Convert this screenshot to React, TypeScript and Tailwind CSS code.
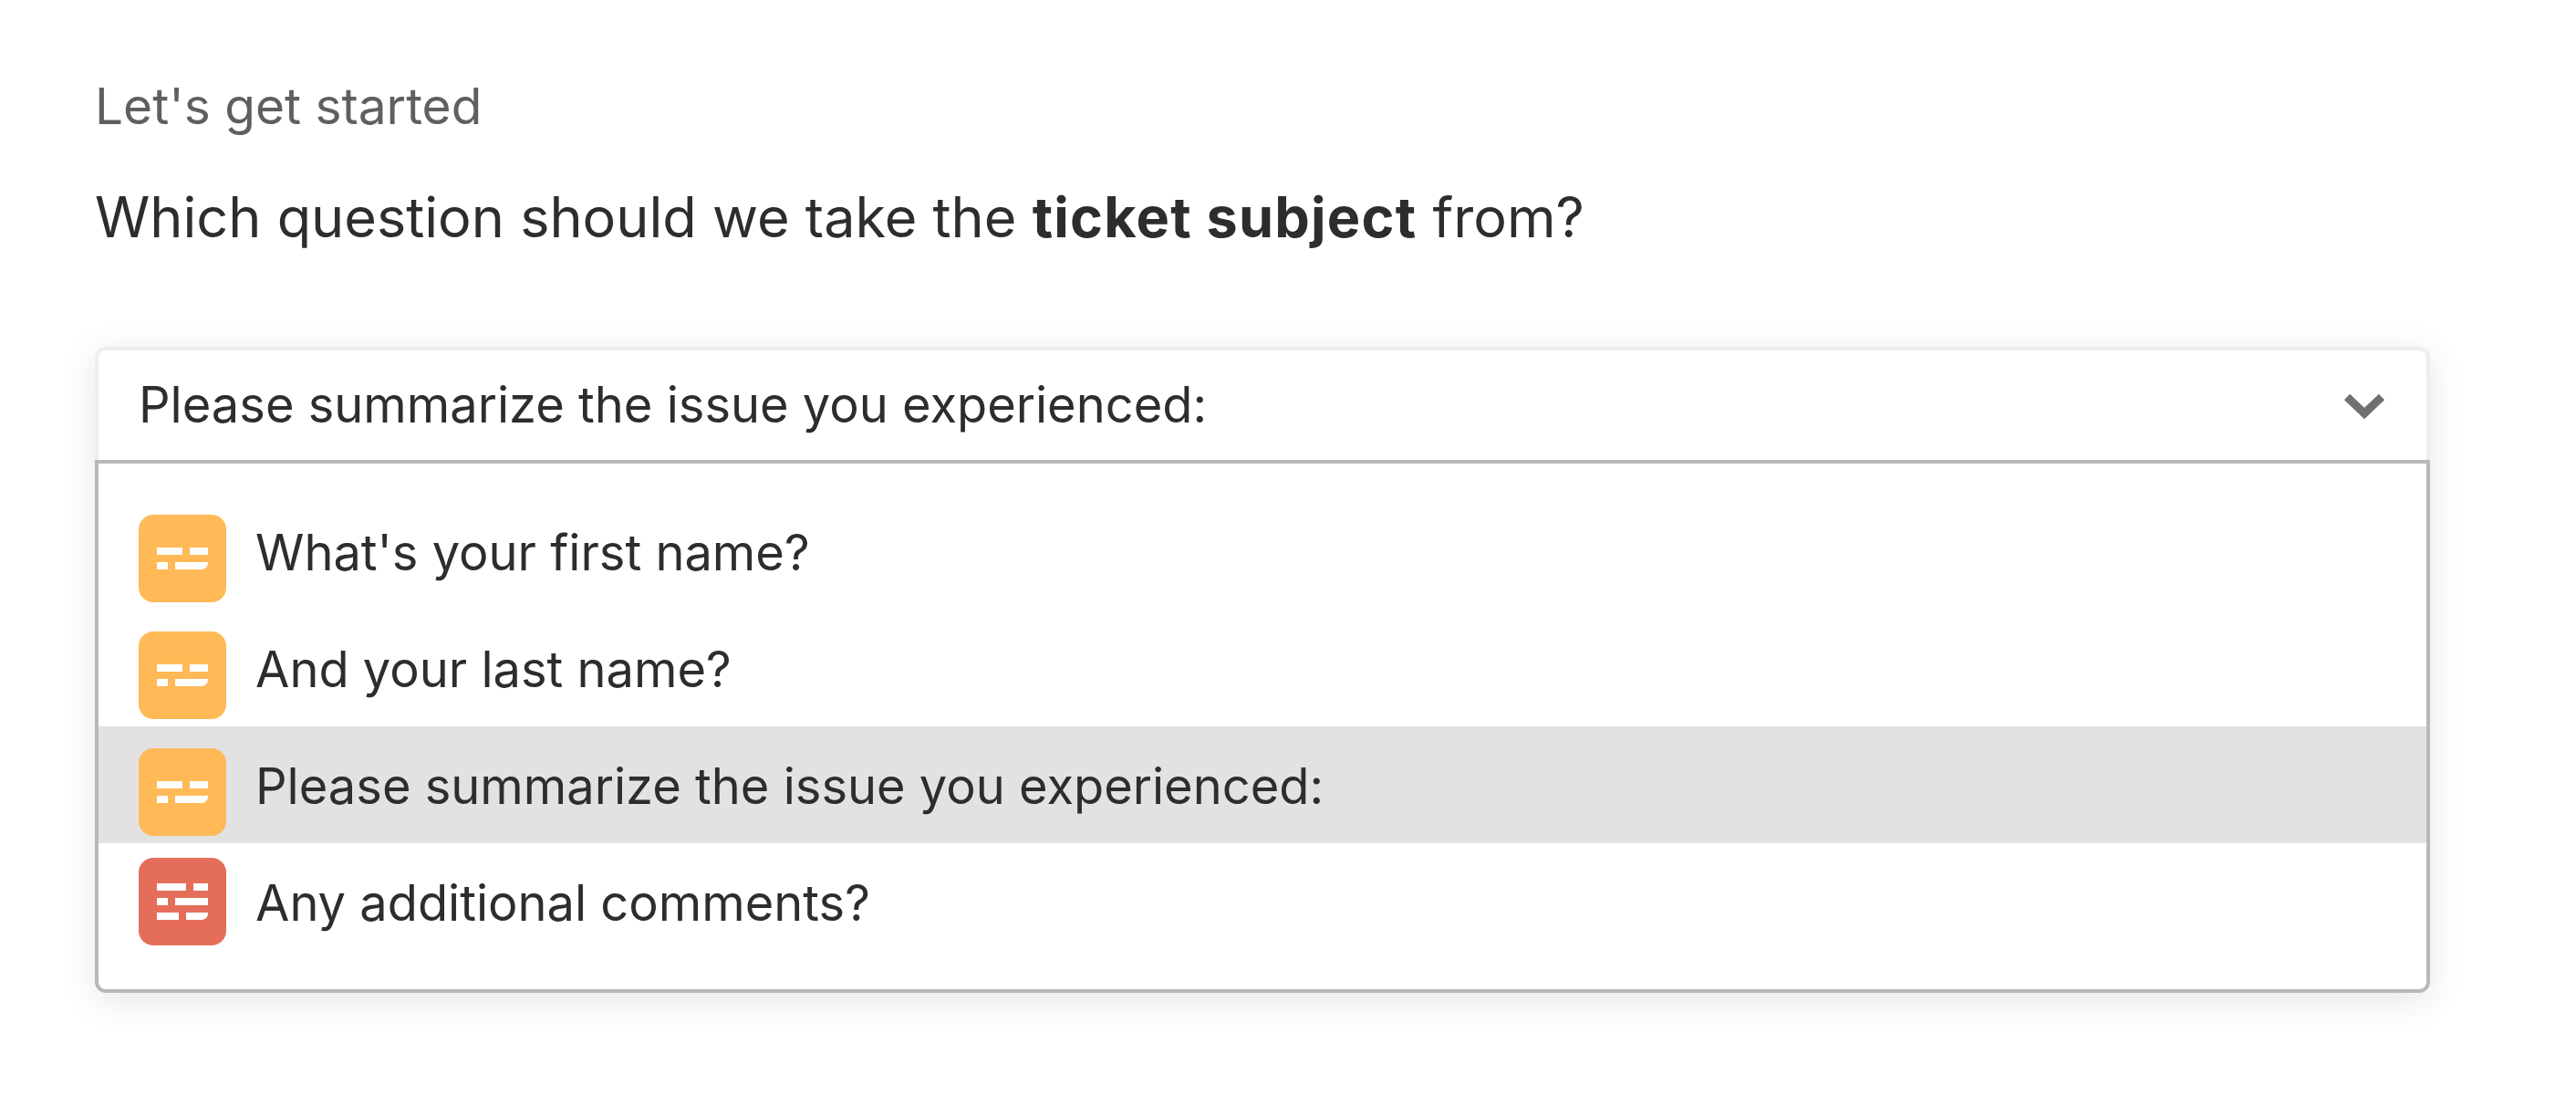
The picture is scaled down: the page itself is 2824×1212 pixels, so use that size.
const rowClass = "h-[128px] flex items-center gap-[32px] pl-[44px]";
const rowText = "text-[#2d2d2d] text-[54.2px] leading-[72px] pt-[1px]";

function ShortAnswerIcon() {
    return (
        <svg width="96" height="96" viewBox="0 0 96 96" className="shrink-0 mt-[16px]">
            <rect width="96" height="96" rx="16" fill="#ffb957" />
            <path
                d="M20 36h28v8H20zM56 36h20v8H56zM20 52h12v8H20zM40 52h36v1a7 7 0 0 1-7 7H40z"
                fill="#fff"
            />
        </svg>
    );
}

function LongAnswerIcon() {
    return (
        <svg width="96" height="96" viewBox="0 0 96 96" className="shrink-0">
            <rect width="96" height="96" rx="16" fill="#e56e5b" />
            <path
                d="M20 28h32v8H20zM60 28h16v8H60zM20 44h12v8H20zM40 44h36v8H40zM20 60h24v8H20zM52 60h24v1a7 7 0 0 1-7 7H52z"
                fill="#fff"
            />
        </svg>
    );
}

export default function App() {
    return (
        <div className="w-[2824px] h-[1212px] bg-white overflow-hidden pl-[104px] pt-[80px] font-['Inter',sans-serif]">
            <p className="text-[55px] leading-[72px] text-[#5f5f5f]">
                Let's get started
            </p>
            <p className="mt-[46px] text-[61.2px] leading-[80px] text-[#2d2d2d]">
                Which question should we take the{" "}
                <span className="font-bold tracking-[1.2px]">ticket subject</span> from?
            </p>
            <div className="mt-[102px] w-[2560px] rounded-[12px] bg-white shadow-[0_8px_40px_rgba(0,0,0,0.1)]">
                <div className="h-[124px] flex items-center justify-between pl-[44px] pr-[44px] border-4 border-b-0 border-[#eeeeee] rounded-t-[12px]">
                    <span className="text-[#2d2d2d] text-[54.2px]">
                        Please summarize the issue you experienced:
                    </span>
                    <svg width="48" height="30" viewBox="0 0 48 30">
                        <path d="M5 6l19 18L43 6" fill="none" stroke="#707070" strokeWidth="9" />
                    </svg>
                </div>
                <div className="border-4 border-[#b8b8b8] rounded-b-[12px] py-[32px]">
                    <div className={rowClass}>
                        <ShortAnswerIcon />
                        <span className={rowText}>What's your first name?</span>
                    </div>
                    <div className={rowClass}>
                        <ShortAnswerIcon />
                        <span className={rowText}>And your last name?</span>
                    </div>
                    <div className={rowClass + " bg-[#e2e2e2]"}>
                        <ShortAnswerIcon />
                        <span className={rowText}>Please summarize the issue you experienced:</span>
                    </div>
                    <div className={rowClass}>
                        <LongAnswerIcon />
                        <span className={rowText}>Any additional comments?</span>
                    </div>
                </div>
            </div>
        </div>
    );
}
